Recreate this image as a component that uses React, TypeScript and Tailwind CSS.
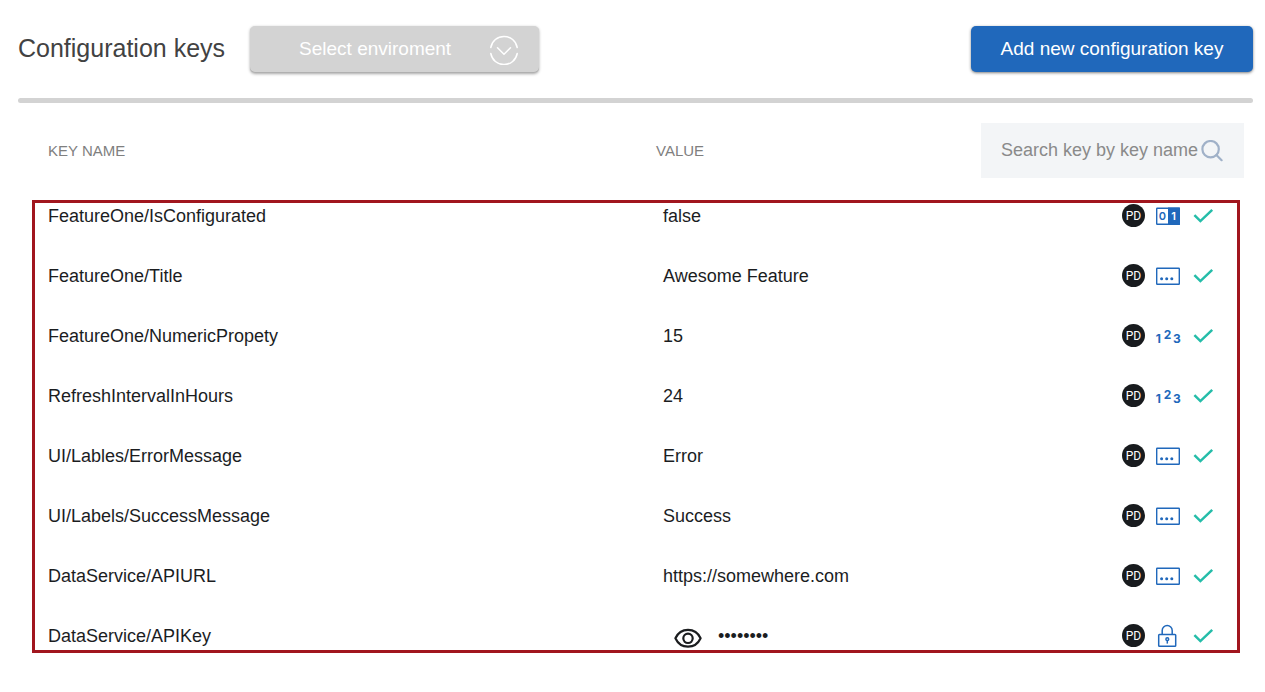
import { useState } from "react";

type Kind = "bool" | "text" | "number" | "secret";

interface ConfigKey {
  name: string;
  value: string;
  kind: Kind;
}

const configKeys: ConfigKey[] = [
  { name: "FeatureOne/IsConfigurated", value: "false", kind: "bool" },
  { name: "FeatureOne/Title", value: "Awesome Feature", kind: "text" },
  { name: "FeatureOne/NumericPropety", value: "15", kind: "number" },
  { name: "RefreshIntervalInHours", value: "24", kind: "number" },
  { name: "UI/Lables/ErrorMessage", value: "Error", kind: "text" },
  { name: "UI/Labels/SuccessMessage", value: "Success", kind: "text" },
  { name: "DataService/APIURL", value: "https://somewhere.com", kind: "text" },
  { name: "DataService/APIKey", value: "••••••••", kind: "secret" },
];

function ChevronCircle() {
  return (
    <svg viewBox="0 0 30 30" className="pointer-events-none absolute top-[9px] right-5 size-[30px]" fill="none" stroke="white" strokeWidth="1.5" strokeLinecap="round" strokeLinejoin="round" aria-hidden="true">
      <path d="M1.8 12.5A13.4 13.4 0 0 1 28.2 12.5M1.8 18.5A13.4 13.4 0 0 0 28.2 18.5" />
      <path d="M8.5 12.8 15 19.3 21.5 12.8" />
    </svg>
  );
}

function SearchIcon() {
  return (
    <svg viewBox="0 0 22 22" className="pointer-events-none absolute top-[17px] right-[21px] size-[22px]" fill="none" stroke="#a0b1c8" strokeWidth="2.2" strokeLinecap="round" aria-hidden="true">
      <circle cx="9.6" cy="9.2" r="8.2" />
      <path d="M15.4 15 20.6 20.2" />
    </svg>
  );
}

function KindIcon({ kind }: { kind: Kind }) {
  if (kind === "bool") {
    return (
      <svg viewBox="0 0 24 24" className="size-6" aria-hidden="true">
        <rect x="0.7" y="4.2" width="22.6" height="16" rx="0.5" fill="white" stroke="#2068bb" strokeWidth="1.4" />
        <rect x="12" y="3.5" width="12" height="17.4" fill="#2068bb" />
        <text x="6.5" y="16" textAnchor="middle" fontSize="11" fontWeight="600" fill="#2068bb" className="font-[Inter,sans-serif]">0</text>
        <text x="17.6" y="16" textAnchor="middle" fontSize="11" fontWeight="600" fill="white" className="font-[Inter,sans-serif]">1</text>
      </svg>
    );
  }
  if (kind === "number") {
    return (
      <svg viewBox="0 0 24 24" className="size-6 overflow-visible font-[Inter,sans-serif]" fill="#2068bb" fontSize="12" fontWeight="700" textAnchor="middle" aria-hidden="true">
        <text x="2.3" y="19">1</text>
        <text x="11.6" y="15">2</text>
        <text x="20.8" y="19">3</text>
      </svg>
    );
  }
  if (kind === "secret") {
    return (
      <svg viewBox="0 0 24 24" className="size-6" fill="none" stroke="#2068bb" strokeWidth="1.5" strokeLinejoin="round" aria-hidden="true">
        <rect x="2.7" y="10.5" width="17" height="11.8" rx="0.8" />
        <path d="M6.2 10.3V6.6a5 5 0 0 1 10 0v3.7" />
        <circle cx="11.3" cy="15.2" r="1.4" />
        <path d="M11.3 16.6v3" />
      </svg>
    );
  }
  return (
    <svg viewBox="0 0 24 24" className="size-6" aria-hidden="true">
      <rect x="0.7" y="4.2" width="22.6" height="16" rx="0.5" fill="white" stroke="#2068bb" strokeWidth="1.4" />
      <g fill="#2068bb">
        <circle cx="5.6" cy="14.7" r="1.5" />
        <circle cx="10.7" cy="14.7" r="1.5" />
        <circle cx="15.8" cy="14.7" r="1.5" />
      </g>
    </svg>
  );
}

function CheckIcon() {
  return (
    <svg viewBox="0 0 23 24" className="h-6 w-[23px]" fill="none" stroke="#25bda9" strokeWidth="2.5" aria-hidden="true">
      <path d="M3.4 11.2 9.4 17.1 21.2 5.8" />
    </svg>
  );
}

function EyeIcon() {
  return (
    <svg viewBox="0 0 28 20" className="h-5 w-7" fill="none" stroke="#1b1d1f" strokeWidth="2.2" strokeLinejoin="round" aria-hidden="true">
      <path d="M1.4 10.3C4 4.7 8.5 1.9 14 1.9S24 4.7 26.6 10.3C24 15.9 19.5 18.7 14 18.7S4 15.9 1.4 10.3Z" />
      <circle cx="14" cy="10.3" r="4.7" />
    </svg>
  );
}

export default function App() {
  const [query, setQuery] = useState("");
  const rows = configKeys.filter((k) => k.name.toLowerCase().includes(query.toLowerCase()));

  return (
    <main className="bg-white pt-[26px] pr-3 pb-6 pl-[18px] font-['Liberation_Sans',Arial,sans-serif] text-[#1b1d1f]">
      <header className="flex items-start">
        <h1 className="text-[25px] leading-[44px] text-[#424242]">Configuration keys</h1>
        <div className="relative ml-[25px] w-[289px]">
          <select aria-label="Environment" className="block h-[47px] w-full appearance-none rounded-[5px] bg-[#d3d3d3] pr-16 pl-[49px] text-[19px] text-white shadow-[0_1px_3px_rgba(0,0,0,0.35),inset_0_-1px_0_#b0b0b0]">
            <option>Select enviroment</option>
          </select>
          <ChevronCircle />
        </div>
        <button type="button" className="ml-auto h-[46px] w-[282px] rounded-[5px] bg-[#2068bb] text-[19px] text-white shadow-[0_1px_3px_rgba(0,0,0,0.5)]">
          Add new configuration key
        </button>
      </header>

      <div className="mt-[25px] h-[5px] rounded-full bg-[#d3d3d3]" />

      <section className="relative mt-5 pr-[9px] pl-[30px]">
        <table className="w-full table-fixed border-collapse text-left">
          <thead>
            <tr className="text-[15px] text-[#7f7f7f]">
              <th scope="col" className="w-1/2 pb-[7px] font-normal">KEY NAME</th>
              <th scope="col" className="pb-[7px] pl-[10px] font-normal">VALUE</th>
              <th className="w-[263px] pb-2 font-normal">
                <div className="relative">
                  <input
                    type="text"
                    aria-label="Search key by key name"
                    placeholder="Search key by key name"
                    value={query}
                    onChange={(e) => setQuery(e.target.value)}
                    className="block h-[55px] w-full appearance-none bg-[#f3f5f7] pr-11 pl-5 text-lg outline-none placeholder:text-[#8a8a8a]"
                  />
                  <SearchIcon />
                </div>
              </th>
            </tr>
          </thead>
          <tbody>
            {rows.map((row) => (
              <tr key={row.name} className="h-[60px] text-lg">
                <td className="p-0">{row.name}</td>
                <td className="p-0 pl-[17px]">
                  {row.kind === "secret" ? (
                    <div className="flex items-center gap-4 pl-[11px]">
                      <button type="button" aria-label="Show value" className="pt-1">
                        <EyeIcon />
                      </button>
                      <span>{row.value}</span>
                    </div>
                  ) : (
                    row.value
                  )}
                </td>
                <td className="p-0 pr-[30px]">
                  <div className="flex items-start justify-end gap-[11px]">
                    <span className="flex size-[23px] items-center justify-center rounded-full bg-[#181b1e] font-[Roboto,sans-serif] text-xs text-white">PD</span>
                    <KindIcon kind={row.kind} />
                    <CheckIcon />
                  </div>
                </td>
              </tr>
            ))}
          </tbody>
        </table>
        <div className="pointer-events-none absolute top-[77px] right-[13px] bottom-[13px] left-[14px] border-3 border-[#a1161e]" />
      </section>
    </main>
  );
}
